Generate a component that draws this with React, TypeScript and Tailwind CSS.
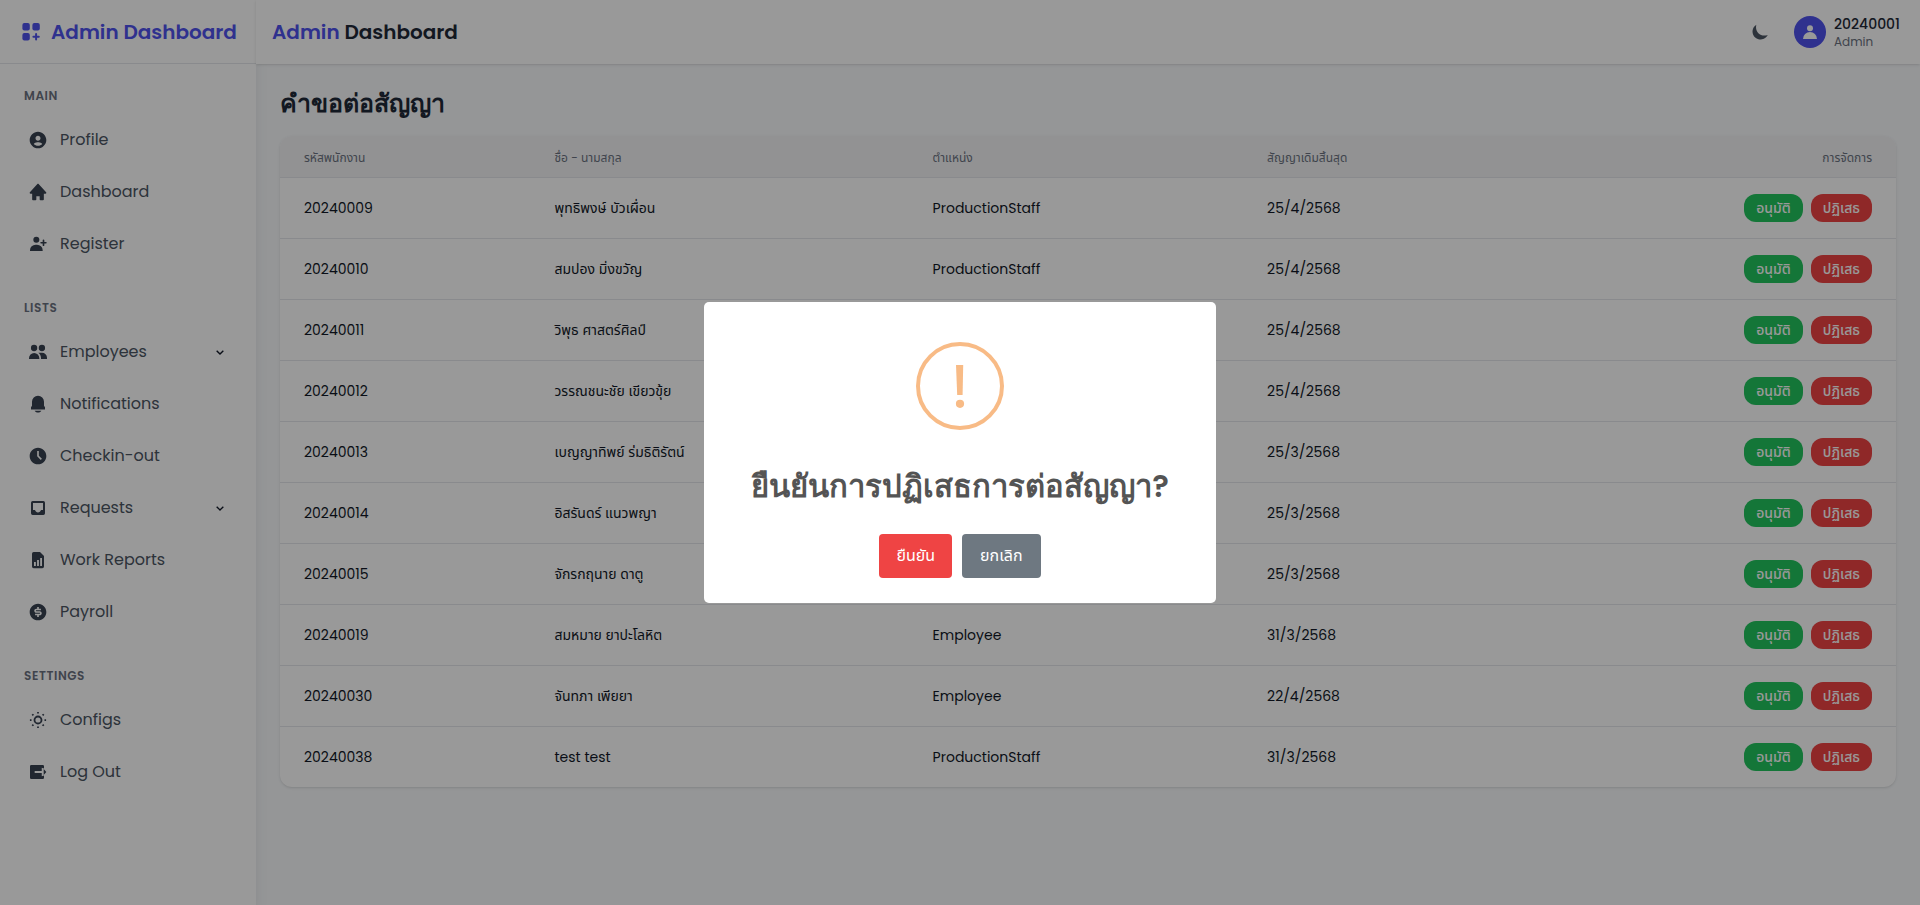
import type { ReactNode } from "react";
import { BiChevronDown, BiSolidHome, BiSolidTimeFive, BiSolidUserCircle } from "react-icons/bi";
import { RiMoneyDollarCircleFill } from "react-icons/ri";

function Glyph({ children, className = "size-5" }: { children: ReactNode; className?: string }) {
  return (
    <svg viewBox="0 0 24 24" fill="currentColor" aria-hidden="true" className={className}>
      {children}
    </svg>
  );
}

const LogoIcon = () => (
  <Glyph className="size-6">
    <rect x="2.4" y="3" width="7.4" height="7.4" rx="2" />
    <rect x="12.4" y="3" width="7.4" height="7.4" rx="2" />
    <rect x="2.4" y="13" width="7.4" height="7.4" rx="2" />
    <path d="M16.1 14v5.4M13.4 16.7h5.4" stroke="currentColor" strokeWidth="2" strokeLinecap="round" />
  </Glyph>
);

const UserPlusIcon = () => (
  <Glyph>
    <circle cx="10" cy="7" r="3.6" />
    <path d="M2.4 20.4v-.8a6.8 6.8 0 0 1 6.8-6.8h1.6a6.8 6.8 0 0 1 6.8 6.8v.8z" />
    <path d="M18.6 7.6v5.8M15.7 10.5h5.8" stroke="currentColor" strokeWidth="2" strokeLinecap="round" />
  </Glyph>
);

const GroupIcon = () => (
  <Glyph>
    <circle cx="7.3" cy="7.2" r="3.8" />
    <circle cx="16.7" cy="7.2" r="3.8" />
    <path d="M1.2 20.4v-1a6.2 6.2 0 0 1 12.4 0v1z" />
    <path d="M12.4 13h4.4a6 6 0 0 1 6 6v1.4h-7.2v-1.2c0-2.4-1.2-4.6-3.2-6.2z" />
  </Glyph>
);

const BellIcon = () => (
  <Glyph>
    <path d="M12 2a7.2 7.2 0 0 0-7.2 7.2v5L3.6 16v2.6h16.8V16l-1.2-1.8v-5A7.2 7.2 0 0 0 12 2z" />
    <path d="M8 20h8c-.6 1.4-2.1 2.2-4 2.2S8.6 21.4 8 20z" />
  </Glyph>
);

const InboxIcon = () => (
  <Glyph>
    <path
      fillRule="evenodd"
      d="M5.6 3.6h12.8a2 2 0 0 1 2 2v12.8a2 2 0 0 1-2 2H5.6a2 2 0 0 1-2-2V5.6a2 2 0 0 1 2-2zM6 6v8.4h2.4c.6 1.9 1.9 3 3.6 3s3-1.1 3.6-3H18V6z"
    />
  </Glyph>
);

const ReportIcon = () => (
  <Glyph>
    <path
      fillRule="evenodd"
      d="M6.8 2.4h7.6l4.8 4.8v12.6a2 2 0 0 1-2 2H6.8a2 2 0 0 1-2-2V4.4a2 2 0 0 1 2-2zM7.2 14.4v4.8h2.2v-4.8zM10.9 12v7.2h2.2V12zM14.6 9.6v9.6h2.2V9.6z"
    />
  </Glyph>
);

const ConfigIcon = () => (
  <Glyph>
    <circle cx="12" cy="12" r="4.2" fill="none" stroke="currentColor" strokeWidth="2.2" />
    <path
      d="M12 2.3v1.9M12 19.8v1.9M2.3 12h1.9M19.8 12h1.9M5.1 5.1l1.4 1.4M17.5 17.5l1.4 1.4M18.9 5.1l-1.4 1.4M6.5 17.5l-1.4 1.4"
      stroke="currentColor"
      strokeWidth="2.1"
    />
  </Glyph>
);

const LogOutIcon = () => (
  <Glyph>
    <path d="M3.9 3.6h13.8a1.5 1.5 0 0 1 1.5 1.5v2.7l-2.7-1v4H8v2.4h8.5v4l2.7-1v2.7a1.5 1.5 0 0 1-1.5 1.5H3.9a1.5 1.5 0 0 1-1.5-1.5V5.1a1.5 1.5 0 0 1 1.5-1.5z" />
    <path d="M18.8 8.4 22 12l-3.2 3.6z" />
  </Glyph>
);

const MoonIcon = () => (
  <Glyph>
    <path d="M7.6 3.2A9.6 9.6 0 1 0 21.3 15.5C13 18.6 5.4 11.8 7.6 3.2z" />
  </Glyph>
);

type NavItem = { label: string; icon: ReactNode; expandable?: boolean };

const sections: { title: string; items: NavItem[] }[] = [
  {
    title: "MAIN",
    items: [
      { label: "Profile", icon: <BiSolidUserCircle className="size-5" /> },
      { label: "Dashboard", icon: <BiSolidHome className="size-5" /> },
      { label: "Register", icon: <UserPlusIcon /> },
    ],
  },
  {
    title: "LISTS",
    items: [
      { label: "Employees", icon: <GroupIcon />, expandable: true },
      { label: "Notifications", icon: <BellIcon /> },
      { label: "Checkin-out", icon: <BiSolidTimeFive className="size-5" /> },
      { label: "Requests", icon: <InboxIcon />, expandable: true },
      { label: "Work Reports", icon: <ReportIcon /> },
      { label: "Payroll", icon: <RiMoneyDollarCircleFill className="size-5" /> },
    ],
  },
  {
    title: "SETTINGS",
    items: [
      { label: "Configs", icon: <ConfigIcon /> },
      { label: "Log Out", icon: <LogOutIcon /> },
    ],
  },
];

const requests = [
  { id: "20240009", name: "พุทธิพงษ์ บัวเผื่อน", position: "ProductionStaff", end: "25/4/2568" },
  { id: "20240010", name: "สมปอง มิ่งขวัญ", position: "ProductionStaff", end: "25/4/2568" },
  { id: "20240011", name: "วิพุธ ศาสตร์ศิลป์", position: "ProductionStaff", end: "25/4/2568" },
  { id: "20240012", name: "วรรณชนะชัย เขียวขุ้ย", position: "ProductionStaff", end: "25/4/2568" },
  { id: "20240013", name: "เบญญาทิพย์ ร่มธิติรัตน์", position: "ProductionStaff", end: "25/3/2568" },
  { id: "20240014", name: "อิสรันดร์ แนวพญา", position: "ProductionStaff", end: "25/3/2568" },
  { id: "20240015", name: "จักรกฤนาย ดาตู", position: "ProductionStaff", end: "25/3/2568" },
  { id: "20240019", name: "สมหมาย ยาปะโลหิต", position: "Employee", end: "31/3/2568" },
  { id: "20240030", name: "จันทภา เพียยา", position: "Employee", end: "22/4/2568" },
  { id: "20240038", name: "test test", position: "ProductionStaff", end: "31/3/2568" },
];

const itemClass = "flex w-full items-center gap-3 rounded-lg px-3 py-3 text-left text-base text-[#4b5563]";

function Sidebar() {
  return (
    <aside className="z-10 flex w-64 shrink-0 flex-col bg-white shadow-lg">
      <div className="flex h-16 items-center gap-[7px] border-b border-[#e5e7eb] pl-5 text-[#4f52ed]">
        <LogoIcon />
        <span className="text-xl font-semibold whitespace-nowrap">Admin Dashboard</span>
      </div>
      <nav className="flex flex-col gap-8 px-4 py-6">
        {sections.map((section) => (
          <section key={section.title}>
            <h2 className="mb-3 px-2 text-xs font-semibold tracking-wider text-[#6b7280]">{section.title}</h2>
            <ul className="flex flex-col gap-1">
              {section.items.map((item) => (
                <li key={item.label}>
                  {item.expandable ? (
                    <button type="button" aria-expanded="false" className={itemClass}>
                      <span className="text-[#374151]">{item.icon}</span>
                      <span className="flex-1">{item.label}</span>
                      <BiChevronDown className="size-4 text-[#111827]" />
                    </button>
                  ) : (
                    <a href="#" className={itemClass}>
                      <span className="text-[#374151]">{item.icon}</span>
                      {item.label}
                    </a>
                  )}
                </li>
              ))}
            </ul>
          </section>
        ))}
      </nav>
    </aside>
  );
}

function Navbar() {
  return (
    <header className="z-20 flex h-16 items-center justify-between bg-white pr-5 pl-4 shadow-sm">
      <h1 className="text-xl font-semibold text-[#1f2937]">
        <span className="text-[#4f52ed]">Admin</span> Dashboard
      </h1>
      <div className="flex items-center gap-4">
        <button type="button" aria-label="Toggle dark mode" className="rounded-full p-2 text-[#4b5563]">
          <MoonIcon />
        </button>
        <div className="flex items-center gap-2">
          <div className="flex size-8 items-center justify-center rounded-full bg-[#4f52ed] text-white">
            <Glyph>
              <circle cx="12" cy="7.4" r="3.6" />
              <path d="M3.6 20.4a8.4 8.4 0 0 1 16.8 0z" />
            </Glyph>
          </div>
          <div>
            <p className="text-sm font-medium text-[#1f2937]">20240001</p>
            <p className="text-xs text-[#6b7280]">Admin</p>
          </div>
        </div>
      </div>
    </header>
  );
}

function RequestsTable() {
  return (
    <div className="overflow-hidden rounded-xl bg-white shadow-sm">
      <table className="w-full table-fixed">
        <colgroup>
          <col className="w-[15.5%]" />
          <col className="w-[23.4%]" />
          <col className="w-[20.7%]" />
          <col />
        </colgroup>
        <thead className="bg-[#f3f4f6] text-xs text-[#6b7280]">
          <tr className="h-[41px] border-b border-[#e5e7eb] text-left">
            <th scope="col" className="px-6 pt-1 font-normal">รหัสพนักงาน</th>
            <th scope="col" className="px-6 pt-1 font-normal">ชื่อ - นามสกุล</th>
            <th scope="col" className="px-6 pt-1 font-normal">ตำแหน่ง</th>
            <th scope="col" className="px-6 pt-1 font-normal">สัญญาเดิมสิ้นสุด</th>
            <th scope="col" className="px-6 pt-1 text-right font-normal">การจัดการ</th>
          </tr>
        </thead>
        <tbody className="divide-y divide-[#e5e7eb] text-sm text-[#111827]">
          {requests.map((request) => (
            <tr key={request.id}>
              <td className="px-6 py-4">{request.id}</td>
              <td className="px-6 py-4">{request.name}</td>
              <td className="px-6 py-4">{request.position}</td>
              <td className="px-6 py-4">{request.end}</td>
              <td className="px-6 py-4">
                <div className="flex justify-end gap-2">
                  <button type="button" className="h-7 rounded-xl bg-[#22c55e] px-3 text-sm font-medium text-white">
                    อนุมัติ
                  </button>
                  <button type="button" className="h-7 rounded-xl bg-[#ef4444] px-3 text-sm font-medium text-white">
                    ปฏิเสธ
                  </button>
                </div>
              </td>
            </tr>
          ))}
        </tbody>
      </table>
    </div>
  );
}

function ConfirmDialog() {
  return (
    <div className="fixed inset-0 z-50 flex items-center justify-center bg-black/40">
      <div
        role="dialog"
        aria-modal="true"
        aria-labelledby="confirm-title"
        className="flex w-full max-w-lg flex-col items-center rounded-[5px] bg-white pt-10 pb-[25px]"
      >
        <svg viewBox="0 0 88 88" className="size-22" fill="#f8bb86" aria-hidden="true">
          <circle cx="44" cy="44" r="42" fill="none" stroke="#f8bb86" strokeWidth="4" />
          <path d="M40 23h7.2l-.6 30h-5.4z" />
          <circle cx="44" cy="61.8" r="4.1" />
        </svg>
        <h2 id="confirm-title" className="mt-8 font-[Poppins,Inter,sans-serif] text-[31px] leading-12 font-semibold text-[#545454]">
          ยืนยันการปฏิเสธการต่อสัญญา?
        </h2>
        <div className="mt-6 flex gap-2.5">
          <button type="button" className="h-11 rounded bg-[#ef4444] px-[17px] text-base text-white">
            ยืนยัน
          </button>
          <button type="button" className="h-11 rounded bg-[#6e7881] px-[18px] text-base text-white">
            ยกเลิก
          </button>
        </div>
      </div>
    </div>
  );
}

export default function App() {
  return (
    <div className="flex min-h-screen bg-slate-50 font-[Poppins,'Noto_Sans_Thai',Inter,sans-serif]">
      <Sidebar />
      <div className="flex min-w-0 flex-1 flex-col">
        <Navbar />
        <main className="p-6">
          <h2 className="mb-4 font-[Poppins,Inter,sans-serif] text-[25px] leading-8 font-semibold text-[#1f2937]">
            คำขอต่อสัญญา
          </h2>
          <RequestsTable />
        </main>
      </div>
      <ConfirmDialog />
    </div>
  );
}
